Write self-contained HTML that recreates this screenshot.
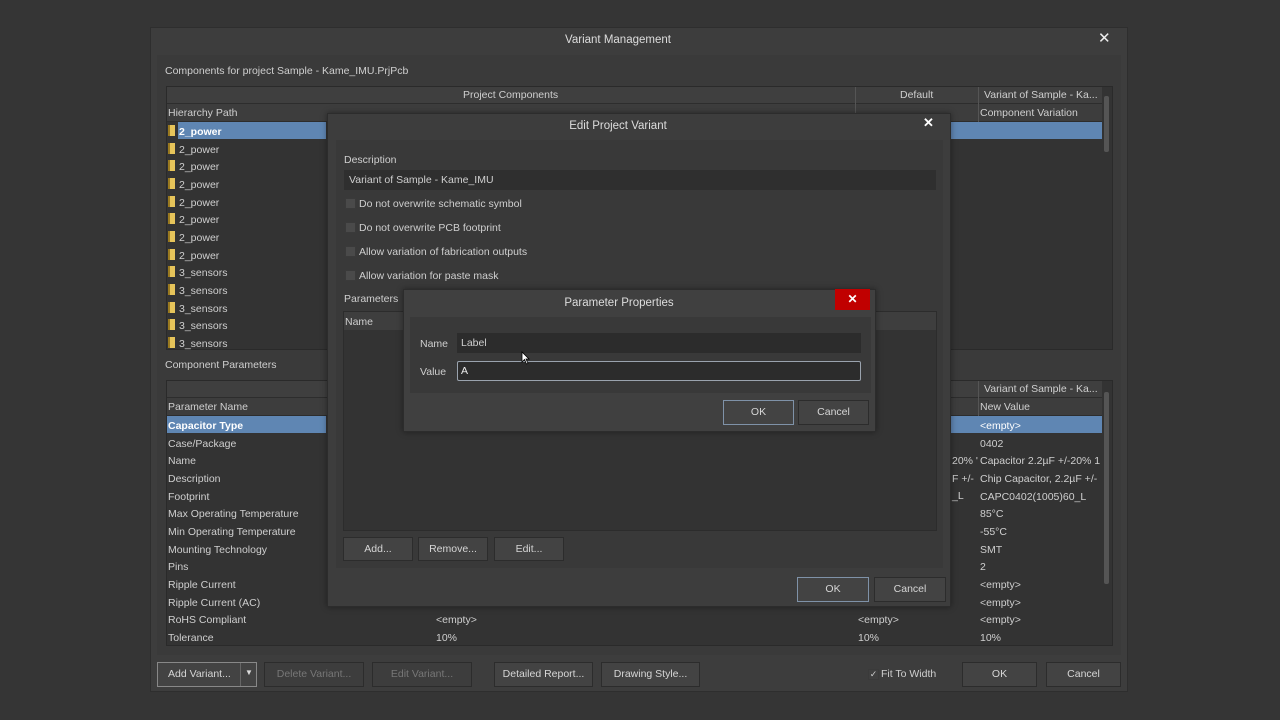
<!DOCTYPE html>
<html><head><meta charset="utf-8"><style>
*{margin:0;padding:0;box-sizing:border-box}
body{width:1280px;height:720px;background:#353535;font-family:"Liberation Sans",sans-serif;font-size:10.5px;color:#cfcfcf;position:relative;overflow:hidden}
.a{position:absolute;white-space:nowrap}
.btn{position:absolute;background:#434343;border:1px solid #2c2c2c;color:#d6d6d6;text-align:center;font-size:10.5px}
.dis{color:#777}
.ic{display:inline-block;width:7px;height:11px;background:#e6c45a;border-left:2px solid #9a7a20;margin-right:4px;vertical-align:-1px}
.cb{position:absolute;width:11px;height:11px;background:#4a4a4a;border:1px solid #3a3a3a}
</style></head><body>
<div class="a" style="left:150px;top:27px;width:978px;height:665px;background:#3d3d3d;border:1px solid #2e2e2e"></div>
<div class="a" style="left:518px;top:34px;width:200px;text-align:center;font-size:11.5px;color:#ddd">Variant Management</div>
<div class="a" style="left:1098px;top:29px;font-size:15px;color:#eee">✕</div>
<div class="a" style="left:157px;top:55px;width:964px;height:600px;background:#3a3a3a"></div>
<div class="a" style="left:165px;top:65px">Components for project Sample - Kame_IMU.PrjPcb</div>
<div class="a" style="left:166px;top:86px;width:947px;height:264px;background:#333;border:1px solid #2a2a2a"></div>
<div class="a" style="left:167px;top:87px;width:935px;height:17px;background:#3f3f3f;border-bottom:1px solid #2d2d2d"></div>
<div class="a" style="left:167px;top:104px;width:935px;height:18px;background:#3d3d3d;border-bottom:1px solid #2d2d2d"></div>
<div class="a" style="left:463px;top:89px">Project Components</div>
<div class="a" style="left:900px;top:89px">Default</div>
<div class="a" style="left:984px;top:89px">Variant of Sample - Ka...</div>
<div class="a" style="left:855px;top:87px;width:1px;height:35px;background:#555"></div>
<div class="a" style="left:978px;top:87px;width:1px;height:35px;background:#555"></div>
<div class="a" style="left:168px;top:107px">Hierarchy Path</div>
<div class="a" style="left:980px;top:107px">Component Variation</div>
<div class="a" style="left:178px;top:122px;width:148px;height:17px;background:#5f86b3"></div>
<div class="a" style="left:950px;top:122px;width:152px;height:17px;background:#5f86b3"></div>
<div class="a" style="left:1104px;top:96px;width:5px;height:56px;background:#555;border-radius:2px"></div>
<div class="a" style="left:168px;top:124px;line-height:17.65px">
<div><span class="ic"></span><b style="color:#fff">2_power</b></div>
<div><span class="ic"></span>2_power</div><div><span class="ic"></span>2_power</div><div><span class="ic"></span>2_power</div><div><span class="ic"></span>2_power</div><div><span class="ic"></span>2_power</div><div><span class="ic"></span>2_power</div><div><span class="ic"></span>2_power</div>
<div><span class="ic"></span>3_sensors</div><div><span class="ic"></span>3_sensors</div><div><span class="ic"></span>3_sensors</div><div><span class="ic"></span>3_sensors</div><div><span class="ic"></span>3_sensors</div>
</div>
<div class="a" style="left:165px;top:359px">Component Parameters</div>
<div class="a" style="left:166px;top:380px;width:947px;height:266px;background:#333;border:1px solid #2a2a2a"></div>
<div class="a" style="left:167px;top:381px;width:935px;height:17px;background:#3f3f3f;border-bottom:1px solid #2d2d2d"></div>
<div class="a" style="left:167px;top:398px;width:935px;height:18px;background:#3d3d3d;border-bottom:1px solid #2d2d2d"></div>
<div class="a" style="left:984px;top:383px">Variant of Sample - Ka...</div>
<div class="a" style="left:978px;top:381px;width:1px;height:35px;background:#555"></div>
<div class="a" style="left:168px;top:401px">Parameter Name</div>
<div class="a" style="left:980px;top:401px">New Value</div>
<div class="a" style="left:167px;top:416px;width:159px;height:17px;background:#5f86b3"></div>
<div class="a" style="left:950px;top:416px;width:152px;height:17px;background:#5f86b3"></div>
<div class="a" style="left:1104px;top:392px;width:5px;height:192px;background:#555;border-radius:2px"></div>
<div class="a" style="left:168px;top:418px;line-height:17.65px">
<div><b style="color:#fff">Capacitor Type</b></div><div>Case/Package</div><div>Name</div><div>Description</div><div>Footprint</div><div>Max Operating Temperature</div><div>Min Operating Temperature</div><div>Mounting Technology</div><div>Pins</div><div>Ripple Current</div><div>Ripple Current (AC)</div><div>RoHS Compliant</div><div>Tolerance</div>
</div>
<div class="a" style="left:980px;top:418px;line-height:17.65px">
<div style="color:#fff">&lt;empty&gt;</div><div>0402</div><div>Capacitor 2.2µF +/-20% 1</div><div>Chip Capacitor, 2.2µF +/-</div><div>CAPC0402(1005)60_L</div><div>85°C</div><div>-55°C</div><div>SMT</div><div>2</div><div>&lt;empty&gt;</div><div>&lt;empty&gt;</div><div>&lt;empty&gt;</div><div>10%</div>
</div>
<div class="a" style="left:952px;top:453px;line-height:17.65px"><div>20% '</div><div>F +/-</div><div>_L</div></div>
<div class="a" style="left:436px;top:612px;line-height:17.65px"><div>&lt;empty&gt;</div><div>10%</div></div>
<div class="a" style="left:858px;top:612px;line-height:17.65px"><div>&lt;empty&gt;</div><div>10%</div></div>
<div class="btn" style="left:157px;top:662px;width:100px;height:25px;border:1px solid #888;line-height:23px;text-align:left;padding-left:10px">Add Variant...</div>
<div class="a" style="left:240px;top:663px;width:1px;height:23px;background:#666"></div>
<div class="a" style="left:245px;top:668px;font-size:8px;color:#ddd">▼</div>
<div class="btn dis" style="left:264px;top:662px;width:100px;height:25px;line-height:23px;background:#3d3d3d">Delete Variant...</div>
<div class="btn dis" style="left:372px;top:662px;width:100px;height:25px;line-height:23px;background:#3d3d3d">Edit Variant...</div>
<div class="btn" style="left:494px;top:662px;width:99px;height:25px;line-height:23px">Detailed Report...</div>
<div class="btn" style="left:601px;top:662px;width:99px;height:25px;line-height:23px">Drawing Style...</div>
<div class="cb" style="left:868px;top:669px;background:#3f3f3f;color:#ccc;font-size:9px;line-height:9px;text-align:center">✓</div>
<div class="a" style="left:881px;top:668px">Fit To Width</div>
<div class="btn" style="left:962px;top:662px;width:75px;height:25px;line-height:23px">OK</div>
<div class="btn" style="left:1046px;top:662px;width:75px;height:25px;line-height:23px">Cancel</div>

<div class="a" style="left:327px;top:113px;width:624px;height:494px;background:#3d3d3d;border:1px solid #2c2c2c;box-shadow:0 0 6px rgba(0,0,0,.4)"></div>
<div class="a" style="left:327px;top:120px;width:582px;text-align:center;font-size:11.5px;color:#ddd">Edit Project Variant</div>
<div class="a" style="left:923px;top:115px;font-size:13px;color:#fff;font-weight:bold">✕</div>
<div class="a" style="left:336px;top:140px;width:607px;height:428px;background:#393939"></div>
<div class="a" style="left:344px;top:154px">Description</div>
<div class="a" style="left:344px;top:170px;width:592px;height:20px;background:#2f2f2f;padding:4px 5px">Variant of Sample - Kame_IMU</div>
<div class="cb" style="left:345px;top:198px"></div><div class="a" style="left:359px;top:198px">Do not overwrite schematic symbol</div>
<div class="cb" style="left:345px;top:222px"></div><div class="a" style="left:359px;top:222px">Do not overwrite PCB footprint</div>
<div class="cb" style="left:345px;top:246px"></div><div class="a" style="left:359px;top:246px">Allow variation of fabrication outputs</div>
<div class="cb" style="left:345px;top:270px"></div><div class="a" style="left:359px;top:270px">Allow variation for paste mask</div>
<div class="a" style="left:344px;top:293px">Parameters</div>
<div class="a" style="left:343px;top:311px;width:594px;height:220px;background:#333;border:1px solid #2c2c2c"></div>
<div class="a" style="left:344px;top:312px;width:592px;height:18px;background:#3e3e3e"></div>
<div class="a" style="left:345px;top:316px">Name</div>
<div class="btn" style="left:343px;top:537px;width:70px;height:24px;line-height:22px">Add...</div>
<div class="btn" style="left:418px;top:537px;width:70px;height:24px;line-height:22px">Remove...</div>
<div class="btn" style="left:494px;top:537px;width:70px;height:24px;line-height:22px">Edit...</div>
<div class="btn" style="left:797px;top:577px;width:72px;height:25px;line-height:23px;border:1px solid #7f92a8">OK</div>
<div class="btn" style="left:874px;top:577px;width:72px;height:25px;line-height:23px">Cancel</div>

<div class="a" style="left:403px;top:289px;width:473px;height:143px;background:#404040;border:1px solid #2c2c2c;box-shadow:0 0 6px rgba(0,0,0,.4)"></div>
<div class="a" style="left:403px;top:297px;width:432px;text-align:center;font-size:11.5px;color:#ddd">Parameter Properties</div>
<div class="a" style="left:835px;top:289px;width:35px;height:21px;background:#c00000;color:#fff;text-align:center;font-size:12px;line-height:21px;font-weight:bold">✕</div>
<div class="a" style="left:410px;top:317px;width:461px;height:76px;background:#393939"></div>
<div class="a" style="left:420px;top:338px">Name</div>
<div class="a" style="left:457px;top:333px;width:404px;height:20px;background:#2c2c2c;padding:4px 4px">Label</div>
<div class="a" style="left:420px;top:366px">Value</div>
<div class="a" style="left:457px;top:361px;width:404px;height:20px;background:#2c2c2c;border:1px solid #9aa3ae;border-radius:2px;padding:3px 3px;color:#eee">A</div>
<svg class="a" style="left:521px;top:351px" width="9" height="14" viewBox="0 0 9 14"><path d="M1 1 L1 11 L3.5 8.5 L5.5 13 L7 12.3 L5 8 L8 8 Z" fill="#fff" stroke="#000" stroke-width=".8"/></svg>
<div class="btn" style="left:723px;top:400px;width:71px;height:25px;line-height:23px;border:1px solid #7f92a8">OK</div>
<div class="btn" style="left:798px;top:400px;width:71px;height:25px;line-height:23px">Cancel</div>
</body></html>
